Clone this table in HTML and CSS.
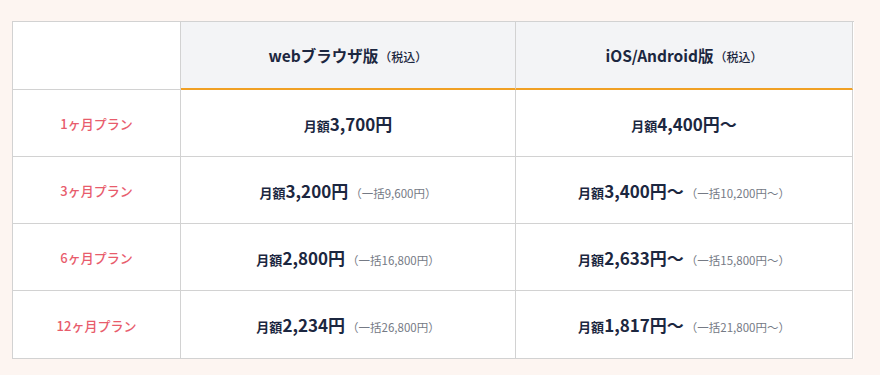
FILE: index.html
```html
<!DOCTYPE html>
<html lang="ja">
<head>
<meta charset="utf-8">
<link rel="stylesheet" href="styles.css">
</head>
<body>
<div class="page">
  <div class="plan-table">
    <div class="cell head blank"></div>
    <div class="cell head col"><p class="line"><span class="ht">webブラウザ版</span><span class="tax">（税込）</span></p></div>
    <div class="cell head col"><p class="line"><span class="ht">iOS/Android版</span><span class="tax">（税込）</span></p></div>

    <div class="cell label">1ヶ月プラン</div>
    <div class="cell price"><p class="line"><span class="mo">月額</span><span class="amt">3,700円</span></p></div>
    <div class="cell price"><p class="line"><span class="mo">月額</span><span class="amt">4,400円〜</span></p></div>

    <div class="cell label">3ヶ月プラン</div>
    <div class="cell price"><p class="line"><span class="mo">月額</span><span class="amt">3,200円</span><span class="lump">（一括9,600円）</span></p></div>
    <div class="cell price"><p class="line"><span class="mo">月額</span><span class="amt">3,400円〜</span><span class="lump">（一括10,200円〜）</span></p></div>

    <div class="cell label">6ヶ月プラン</div>
    <div class="cell price"><p class="line"><span class="mo">月額</span><span class="amt">2,800円</span><span class="lump">（一括16,800円）</span></p></div>
    <div class="cell price"><p class="line"><span class="mo">月額</span><span class="amt">2,633円〜</span><span class="lump">（一括15,800円〜）</span></p></div>

    <div class="cell label">12ヶ月プラン</div>
    <div class="cell price"><p class="line"><span class="mo">月額</span><span class="amt">2,234円</span><span class="lump">（一括26,800円）</span></p></div>
    <div class="cell price"><p class="line"><span class="mo">月額</span><span class="amt">1,817円〜</span><span class="lump">（一括21,800円〜）</span></p></div>
  </div>
</div>
</body>
</html>
```
FILE: styles.css
```css
html, body {
  margin: 0;
  padding: 0;
  background: #fdf5f1;
}
body {
  font-family: "Noto Sans CJK JP", "Noto Sans", sans-serif;
  color: #1c2740;
}
.page {
  padding: 21px 0 0 12px;
  width: 880px;
  height: 375px;
  box-sizing: border-box;
}
.plan-table {
  display: grid;
  grid-template-columns: 168px 335px 337px;
  grid-template-rows: 68px 67px 67px 67px 68px;
  width: 841px;
  border-top: 1px solid #d2d2d2;
  border-left: 1px solid #d2d2d2;
  background: #fff;
}
.cell {
  display: flex;
  align-items: center;
  justify-content: center;
  border-right: 1px solid #d2d2d2;
  border-bottom: 1px solid #d2d2d2;
  box-sizing: border-box;
  white-space: nowrap;
}
.line {
  margin: 0;
  line-height: 1.4;
}
.head.col {
  background: #f3f4f6;
  border-bottom: 2px solid #f0a024;
  padding-top: 1px;
}
.head.blank {
  background: #fff;
}
.ht {
  font-size: 15.5px;
  font-weight: 700;
}
.tax {
  font-size: 12px;
  font-weight: 500;
  margin-left: 1px;
}
.label {
  color: #e85c6c;
  font-size: 13px;
  font-weight: 500;
  padding-top: 1px;
}
.price {
  padding-top: 1px;
}
.mo {
  font-size: 13px;
  font-weight: 700;
}
.amt {
  font-size: 17px;
  font-weight: 700;
}
.lump {
  font-size: 11.5px;
  color: #757a85;
  margin-left: 2px;
}
```
